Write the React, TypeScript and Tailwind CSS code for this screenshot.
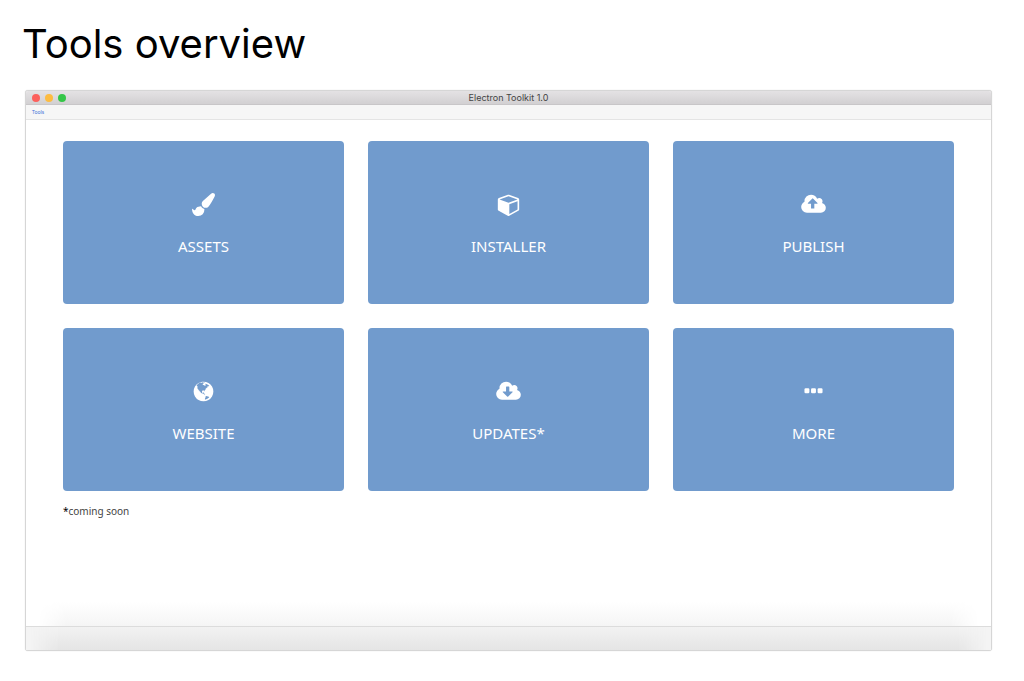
import type { ReactNode } from "react";

const CLOUD =
  "M1920 1152q0 159-112.500 271.500t-271.500 112.500h-1088q-185 0-316.500-131.500t-131.500-316.500q0-130 70-240t188-165q-2-30-2-43 0-212 150-362t362-150q156 0 285.500 87t188.500 231q71-62 166-62 106 0 181 75t75 181q0 76-41 138 130 31 213.500 135.500t83.500 238.500z";

function BrushIcon() {
  return (
    <svg viewBox="0 0 1792 1792" className="size-[23px]" fill="currentColor" aria-hidden="true">
      <path d="M1615 0q70 0 122.500 46.500t52.500 116.500q0 63-45 151-332 629-465 752-97 91-218 91-126 0-216.500-92.500t-90.500-219.500q0-128 92-212l638-579q59-54 130-54zM706 1034q39 76 106.500 130t150.500 76l1 71q4 213-129.500 347t-348.500 134q-123 0-218-46.500t-152.500-127.500-86.500-183-29-220q7 5 41 30t62 44.500 59 36.500 46 17q41 0 55-37 25-66 57.500-112.500t69.500-76 88-47.500 103-25.500 125-10.500z" />
    </svg>
  );
}

function CubeIcon() {
  return (
    <svg viewBox="-64 0 1792 1792" className="size-[23px]" fill="currentColor" aria-hidden="true">
      <path d="M896 1629l640-349v-636l-640 233v752zM832 764l698-254-698-254-698 254zM1664 512v768q0 35-18 65t-49 47l-704 384q-28 16-61 16t-61-16l-704-384q-31-17-49-47t-18-65v-768q0-40 23-73t61-47l704-256q22-8 44-8t44 8l704 256q38 14 61 47t23 73z" />
    </svg>
  );
}

function CloudUpIcon() {
  return (
    <svg viewBox="0 0 1920 1792" className="h-[23px] w-[25px]" fill="currentColor" aria-hidden="true">
      <path d={"M1280 800q0-14-9-23l-352-352q-9-9-23-9t-23 9l-351 351q-10 12-10 24 0 14 9 23t23 9h224v352q0 13 9.500 22.500t22.500 9.500h192q13 0 22.500-9.500t9.500-22.500v-352h224q13 0 22.500-9.500t9.500-22.500z" + CLOUD} fillRule="evenodd" />
    </svg>
  );
}

function CloudDownIcon() {
  return (
    <svg viewBox="0 0 1920 1792" className="h-[23px] w-[25px]" fill="currentColor" aria-hidden="true">
      <path d={"M1280 928q0-14-9-23t-23-9h-224v-352q0-13-9.500-22.500t-22.500-9.500h-192q-13 0-22.500 9.500t-9.500 22.500v352h-224q-13 0-22.500 9.500t-9.500 22.500q0 14 9 23l352 352q9 9 23 9t23-9l351-351q10-12 10-24z" + CLOUD} fillRule="evenodd" />
    </svg>
  );
}

function GlobeIcon() {
  return (
    <svg viewBox="-128 0 1792 1792" className="size-[23px]" fill="currentColor" aria-hidden="true">
      <path d="M768 128q209 0 385.500 103t279.500 279.500 103 385.500-103 385.500-279.500 279.500-385.500 103-385.500-103-279.500-279.500-103-385.500 103-385.500 279.500-279.500 385.500-103zM1042 521q-2 1-9.500 9.500t-13.500 9.500q2 0 4.500-5t5-11 3.500-7q6-7 22-15 14-6 52-12 34-8 51 11-2-2 9.500-13t14.500-12q3-2 15-4.500t15-7.500l2-22q-12 1-17.500-7t-6.500-21q0 2-6 8 0-7-4.500-8t-11.500 1-9 1q-10-3-15-7.500t-8-16.500-4-15q-2-5-9.500-11t-9.500-10q-1-2-2.500-5.500t-3-6.500-4-5.500-5.500-2.500-7 5-7.500 10-4.500 5q-3-2-6-1.500t-4.500 1-4.500 3-5 3.500q-3 2-8.500 3t-8.500 2q15-5-1-11-10-4-16-3 9-4 7.500-12t-8.500-14h5q-1-4-8.500-8.500t-17.500-8.500-13-6q-8-5-34-9.500t-33-.5q-5 6-4.500 10.500t4 14 3.500 12.500q1 6-5.500 13t-6.500 12q0 7 14 15.500t10 21.500q-3 8-16 16t-16 12q-5 8-1.500 18.500t10.500 16.500q2 2 1.500 4t-3.500 4.500-5.500 4-6.500 3.500l-3 2q-11 5-20.500-6t-13.500-26q-7-25-16-30-23-8-29 1-5-13-41-26-25-9-58-4 6-1 0-15-7-15-19-12 3-6 4-17.500t1-13.500q3-13 12-23 1-1 7-8.500t9.500-13.500.5-6q35 4 50-11 5-5 11.500-17t10.500-17q9-6 14-5.500t14.500 5.500 14.500 5q14 1 15.500-11t-7.500-20q12 1 3-17-4-7-8-9-12-4-27 5-8 4 2 8-1-1-9.500 10.500t-16.500 17.500-16-5q-1-1-5.500-13.500t-9.500-13.500q-8 0-16 15 3-8-11-15t-24-8q19-12-8-27-7-4-20.500-5t-19.500 4q-5 7-5.500 11.500t5 8 10.500 5.500 11.500 4 8.500 3q14 10 8 14-2 1-8.500 3.500t-11.500 4.500-6 4q-3 4 0 14t-2 14q-5-5-9-17.500t-7-16.500q7 9-25 6l-10-1q-4 0-16 2t-20.500 1-13.500-8q-4-8 0-20 1-4 4-2-4-3-11-9.500t-10-8.500q-46 15-94 41 6 1 12-1 5-2 13-6.500t10-5.500q34-14 42-7l5-5q14 16 20 25-7-4-30-1-20 6-22 12 7 12 5 18-4-3-11.500-10t-14.500-11-15-5q-16 0-22 1-146 80-235 222 7 7 12 8 4 1 5 9t2.500 11 11.500-3q9 8 3 19 1-1 44 27 19 17 21 21 3 11-10 18-1-2-9-9t-9-4q-3 5 .5 18.500t10.500 12.500q-7 0-9.500 16t-2.500 35.500-1 23.500l2 1q-3 12 5.500 34.500t21.500 19.500q-13 3 20 43 6 8 8 9 3 2 12 7.500t15 10 10 10.500q4 5 10 22.500t14 23.500q-2 6 9.500 20t10.500 23q-1 0-2.500 1t-2.500 1q3 7 15.500 14t15.500 13q1 3 2 10t3 11 8 2q2-20-24-62-15-25-17-29-3-5-5.500-15.500t-4.500-14.500q2 0 6 1.500t8.500 3.500 7.500 4 2 3q-3 7 2 17.500t12 18.500 17 19 12 13q6 6 14 19.500t0 13.500q9 0 20 10.500t17 19.500q5 8 8 26t5 24q2 7 8.500 13.500t12.500 9.500l16 8 13 7q5 2 18.500 10.500t21.500 11.500q10 4 16 4t14.500-2.500 13.500-3.500q15-2 29 15t21 21q36 19 55 11-2 1 .5 7.500t8 15.500 9 14.500 5.500 8.500q5 6 18 15t18 15q6-4 7-9-3 8 7 20t18 10q14-3 14-32-31 15-49-18 0-1-2.500-5.500t-4-8.500-2.500-8.500 0-7.500 5-3q9 0 10-3.500t-2-12.500-4-13q-1-8-11-20t-12-15q-5 9-16 8t-16-9q0 1-1.500 5.500t-1.500 6.500q-13 0-15-1 1-3 2.500-17.500t3.500-22.500q1-4 5.500-12t7.500-14.500 4-12.500-4.500-9.500-17.500-2.500q-19 1-26 20-1 3-3 10.500t-5 11.500-9 7q-7 3-24 2t-24-5q-13-8-22.500-29t-9.500-37q0-10 2.500-26.500t3-25-5.500-24.500q3-2 9-9.500t10-10.500q2-1 4.500-1.500t4.500 0 4-1.500 3-6q-1-1-4-3-3-3-4-3 7 3 28.500-1.500t27.500 1.500q15 11 22-2 0-1-2.500-9.500t-.5-13.500q5 27 29 9 3 3 15.500 5t17.500 5q3 2 7 5.500t5.500 4.500 5-.5 8.500-6.500q10 14 12 24 11 40 19 44 7 3 11 2t4.500-9.500 0-14-1.500-12.500l-1-8v-18l-1-8q-15-3-18.500-12t1.500-18.500 15-18.500q1-1 8-3.500t15.500-6.500 12.500-8q21-19 15-35 7 0 11-9-1 0-5-3t-7.500-5-4.500-2q9-5 2-16 5-3 7.500-11t7.500-10q9 12 21 2 7-8 1-16 5-7 20.500-10.500t18.500-9.500q7 2 8-2t1-12 3-12q4-5 15-9t13-5l17-11q3-4 0-4 18 2 31-11 10-11-6-20 3-6-3-9.500t-15-5.500q3-1 11.500-.5t10.500-1.500q15-10-7-16-17-5-43 12zM879 1533q206-36 351-189-3-3-12.500-4.500t-12.500-3.500q-18-7-24-8 1-7-2.500-13t-8-9-12.500-8-11-7q-2-2-7-6t-7-5.500-7.500-4.500-8.500-2-10 1l-3 1q-3 1-5.500 2.500t-5.500 3-4 3 0 2.500q-21-17-36-22-5-1-11-5.500t-10.500-7-10-1.500-11.500 7q-5 5-6 15t-2 13q-7-5 0-17.500t2-18.500q-3-6-10.500-4.500t-12 4.500-11.500 8.500-9 6.500-8.500 5.500-8.500 7.500q-3 4-6 12t-5 11q-2-4-11.500-6.500t-9.500-5.500q2 10 4 35t5 38q7 31-12 48-27 25-29 40-4 22 12 26 0 7-8 20.500t-7 21.500q0 6 2 16z" fillRule="evenodd" />
    </svg>
  );
}

function EllipsisIcon() {
  return (
    <svg viewBox="-192 0 1792 1792" className="size-[23px]" fill="currentColor" aria-hidden="true">
      <rect x="0" y="640" width="384" height="384" rx="96" />
      <rect x="512" y="640" width="384" height="384" rx="96" />
      <rect x="1024" y="640" width="384" height="384" rx="96" />
    </svg>
  );
}

const tools: { label: string; icon: ReactNode }[] = [
  { label: "ASSETS", icon: <BrushIcon /> },
  { label: "INSTALLER", icon: <CubeIcon /> },
  { label: "PUBLISH", icon: <CloudUpIcon /> },
  { label: "WEBSITE", icon: <GlobeIcon /> },
  { label: "UPDATES*", icon: <CloudDownIcon /> },
  { label: "MORE", icon: <EllipsisIcon /> },
];

export default function App() {
  return (
    <main className="flex min-h-screen flex-col bg-white pt-4 pb-[30px] font-['Noto_Sans',sans-serif]">
      <h1 className="px-[22px] font-['Inter',sans-serif] text-[40px] leading-[56px] text-black">Tools overview</h1>

      <section className="mt-[18px] mr-8 ml-[25px] flex flex-1 flex-col rounded-[3px] border border-[#d6d6d6] bg-white shadow-[0_0_1px_#c8c8c8]">
        <header className="grid h-[14px] grid-cols-3 items-center rounded-t-[2px] border-b border-[#c8c6c8] bg-linear-to-b from-[#e4e2e4] to-[#d2d0d2] px-1.5">
          <div className="flex gap-[5px]">
            <button aria-label="Close" className="size-2 rounded-full bg-[#fc605c]" />
            <button aria-label="Minimize" className="size-2 rounded-full bg-[#fdbc40]" />
            <button aria-label="Zoom" className="size-2 rounded-full bg-[#34c648]" />
          </div>
          <p className="text-center font-['Inter',sans-serif] text-[9px] leading-3 text-[#444]">Electron Toolkit 1.0</p>
        </header>
        <nav className="flex h-[15px] items-center border-b border-[#e4e4e4] bg-[#f6f6f6] px-1.5">
          <a href="#tools" className="text-[5px] leading-2 text-[#3b6fd8]">Tools</a>
        </nav>

        <div className="flex-1 px-[37px] pt-[21px]">
          <div className="grid grid-cols-3 gap-6">
            {tools.map((tool) => (
              <button
                key={tool.label}
                className="flex h-[163px] flex-col items-center rounded-[4px] bg-[#719bcd] pt-[52px] text-white"
              >
                {tool.icon}
                <span className="mt-[18px] text-[15px] leading-6">{tool.label}</span>
              </button>
            ))}
          </div>
          <p className="mt-3 text-[10px] leading-4 text-[#444]">
            <span className="text-black">*</span>coming soon
          </p>
        </div>

        <div className="mx-3 h-6 bg-linear-to-b from-white to-[#f5f5f5] mask-x-from-97%" />
        <footer className="h-6 border-t border-[#dcdcdc] bg-[#f4f4f4]">
          <div className="mx-1 h-full bg-linear-to-b from-[#f2f2f2] to-[#e5e5e5] mask-x-from-97%" />
        </footer>
      </section>
    </main>
  );
}
